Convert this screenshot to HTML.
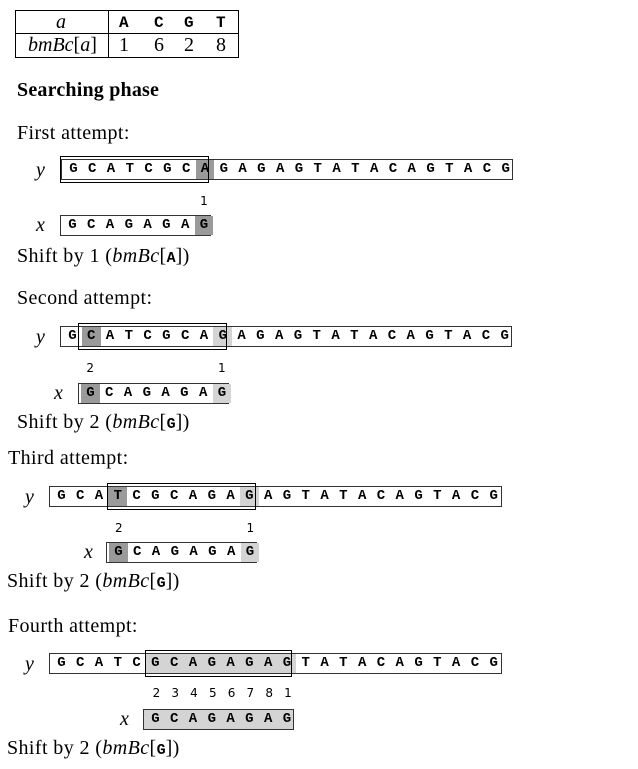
<!DOCTYPE html>
<html><head><meta charset="utf-8"><style>
body{margin:0;width:638px;height:769px;background:#fff;position:relative;font-family:"Liberation Serif",serif;color:#000;overflow:hidden}
.a{position:absolute}
.t{font-size:20px;line-height:20px;white-space:nowrap;letter-spacing:0.4px}
.box{position:absolute;height:21px;border:1px solid #333;display:flex;box-sizing:border-box;padding-left:2px}
.box span{width:18.8px;flex:none;text-align:center;font-family:"Liberation Mono",monospace;font-weight:bold;font-size:14px;line-height:19px}
.d{background:#9a9a9a}.l{background:#d4d4d4}
.win{position:absolute;height:27px;border:1.5px solid #000;box-sizing:border-box}
.lab{position:absolute;display:flex;font-family:"DejaVu Sans",sans-serif;font-size:12px;padding-left:2px}
.lab span{width:18.8px;text-align:center}
.v{font-style:italic;font-size:20px;line-height:20px}
.m{font-family:"Liberation Mono",monospace;font-size:15px;font-weight:bold;letter-spacing:0}
.tb{position:absolute;left:15px;top:10px;width:224px;height:48px;border:1.5px solid #000;box-sizing:border-box}
.tb div{position:absolute;font-size:20px;line-height:20px}
.tb div.h{font-family:"Liberation Mono",monospace;font-size:16px;font-weight:bold}
</style></head><body>
<div class="tb">
 <div style="left:0;right:0;top:22px;border-top:1.5px solid #000"></div>
 <div style="left:92px;top:0;bottom:0;border-left:1.5px solid #000"></div>
 <div style="left:40px;top:1px"><i>a</i></div>
 <div style="left:12px;top:24px"><i>bmBc</i>[<i>a</i>]</div>
 <div class="h" style="left:103px;top:2px">A</div>
 <div class="h" style="left:138px;top:2px">C</div>
 <div class="h" style="left:168px;top:2px">G</div>
 <div class="h" style="left:200px;top:2px">T</div>
 <div style="left:103px;top:24px">1</div>
 <div style="left:138px;top:24px">6</div>
 <div style="left:168px;top:24px">2</div>
 <div style="left:200px;top:24px">8</div>
</div>
<div class="a t" style="left:17px;top:80px;font-weight:bold;letter-spacing:0.2px">Searching phase</div>

<div class="a t" style="left:17px;top:123px">First attempt:</div>
<div class="a v" style="left:36px;top:160px">y</div>
<div class="box" style="left:61px;top:159px;width:452px"><span>G</span><span>C</span><span>A</span><span>T</span><span>C</span><span>G</span><span>C</span><span class="d">A</span><span>G</span><span>A</span><span>G</span><span>A</span><span>G</span><span>T</span><span>A</span><span>T</span><span>A</span><span>C</span><span>A</span><span>G</span><span>T</span><span>A</span><span>C</span><span>G</span></div>
<div class="win" style="left:60px;top:156px;width:149px"></div>
<div class="lab" style="left:61px;top:194px"><span></span><span></span><span></span><span></span><span></span><span></span><span></span><span>1</span></div>
<div class="a v" style="left:36px;top:215px">x</div>
<div class="box" style="left:60px;top:215px;width:151px"><span>G</span><span>C</span><span>A</span><span>G</span><span>A</span><span>G</span><span>A</span><span class="d">G</span></div>
<div class="a t" style="left:17px;top:246px">Shift by 1 (<i>bmBc</i>[<span class="m">A</span>])</div>

<div class="a t" style="left:17px;top:288px">Second attempt:</div>
<div class="a v" style="left:36px;top:327px">y</div>
<div class="box" style="left:60px;top:326px;width:452px"><span>G</span><span class="d">C</span><span>A</span><span>T</span><span>C</span><span>G</span><span>C</span><span>A</span><span class="l">G</span><span>A</span><span>G</span><span>A</span><span>G</span><span>T</span><span>A</span><span>T</span><span>A</span><span>C</span><span>A</span><span>G</span><span>T</span><span>A</span><span>C</span><span>G</span></div>
<div class="win" style="left:78px;top:323px;width:149px"></div>
<div class="lab" style="left:60px;top:361px"><span></span><span>2</span><span></span><span></span><span></span><span></span><span></span><span></span><span>1</span></div>
<div class="a v" style="left:54px;top:383px">x</div>
<div class="box" style="left:78px;top:383px;width:151px"><span class="d">G</span><span>C</span><span>A</span><span>G</span><span>A</span><span>G</span><span>A</span><span class="l">G</span></div>
<div class="a t" style="left:17px;top:412px">Shift by 2 (<i>bmBc</i>[<span class="m">G</span>])</div>

<div class="a t" style="left:8px;top:448px">Third attempt:</div>
<div class="a v" style="left:25px;top:487px">y</div>
<div class="box" style="left:49px;top:486px;width:453px"><span>G</span><span>C</span><span>A</span><span class="d">T</span><span>C</span><span>G</span><span>C</span><span>A</span><span>G</span><span>A</span><span class="l">G</span><span>A</span><span>G</span><span>T</span><span>A</span><span>T</span><span>A</span><span>C</span><span>A</span><span>G</span><span>T</span><span>A</span><span>C</span><span>G</span></div>
<div class="win" style="left:107px;top:483px;width:149px"></div>
<div class="lab" style="left:51px;top:521px"><span></span><span></span><span></span><span>2</span><span></span><span></span><span></span><span></span><span></span><span></span><span>1</span></div>
<div class="a v" style="left:84px;top:542px">x</div>
<div class="box" style="left:106px;top:542px;width:151px"><span class="d">G</span><span>C</span><span>A</span><span>G</span><span>A</span><span>G</span><span>A</span><span class="l">G</span></div>
<div class="a t" style="left:7px;top:571px">Shift by 2 (<i>bmBc</i>[<span class="m">G</span>])</div>

<div class="a t" style="left:8px;top:616px">Fourth attempt:</div>
<div class="a v" style="left:25px;top:654px">y</div>
<div class="box" style="left:49px;top:653px;width:453px"><span>G</span><span>C</span><span>A</span><span>T</span><span>C</span><span class="l">G</span><span class="l">C</span><span class="l">A</span><span class="l">G</span><span class="l">A</span><span class="l">G</span><span class="l">A</span><span class="l">G</span><span>T</span><span>A</span><span>T</span><span>A</span><span>C</span><span>A</span><span>G</span><span>T</span><span>A</span><span>C</span><span>G</span></div>
<div class="win" style="left:145px;top:650px;width:147px"></div>
<div class="lab" style="left:51px;top:686px"><span></span><span></span><span></span><span></span><span></span><span>2</span><span>3</span><span>4</span><span>5</span><span>6</span><span>7</span><span>8</span><span>1</span></div>
<div class="a v" style="left:120px;top:709px">x</div>
<div class="box" style="left:143px;top:709px;width:151px;background:#d4d4d4"><span>G</span><span>C</span><span>A</span><span>G</span><span>A</span><span>G</span><span>A</span><span>G</span></div>
<div class="a t" style="left:7px;top:738px">Shift by 2 (<i>bmBc</i>[<span class="m">G</span>])</div>
</body></html>
